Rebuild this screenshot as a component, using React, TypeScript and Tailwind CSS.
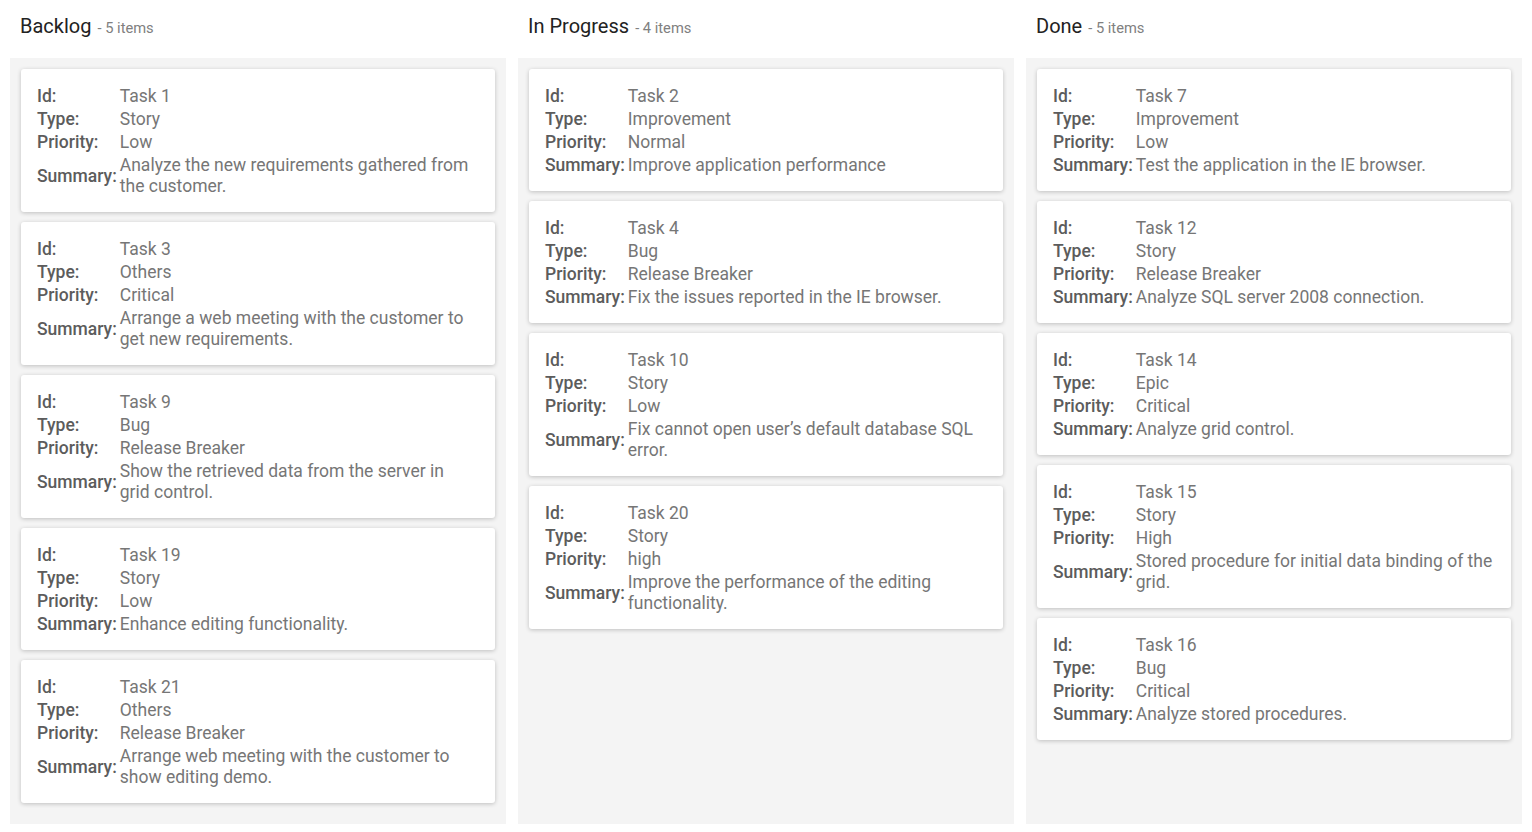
type Task = {
  id: string;
  type: string;
  priority: string;
  summary: string;
};

type Column = {
  title: string;
  tasks: Task[];
};

const columns: Column[] = [
  {
    title: 'Backlog',
    tasks: [
      { id: 'Task 1', type: 'Story', priority: 'Low', summary: 'Analyze the new requirements gathered from the customer.' },
      { id: 'Task 3', type: 'Others', priority: 'Critical', summary: 'Arrange a web meeting with the customer to get new requirements.' },
      { id: 'Task 9', type: 'Bug', priority: 'Release Breaker', summary: 'Show the retrieved data from the server in grid control.' },
      { id: 'Task 19', type: 'Story', priority: 'Low', summary: 'Enhance editing functionality.' },
      { id: 'Task 21', type: 'Others', priority: 'Release Breaker', summary: 'Arrange web meeting with the customer to show editing demo.' },
    ],
  },
  {
    title: 'In Progress',
    tasks: [
      { id: 'Task 2', type: 'Improvement', priority: 'Normal', summary: 'Improve application performance' },
      { id: 'Task 4', type: 'Bug', priority: 'Release Breaker', summary: 'Fix the issues reported in the IE browser.' },
      { id: 'Task 10', type: 'Story', priority: 'Low', summary: 'Fix cannot open user’s default database SQL error.' },
      { id: 'Task 20', type: 'Story', priority: 'high', summary: 'Improve the performance of the editing functionality.' },
    ],
  },
  {
    title: 'Done',
    tasks: [
      { id: 'Task 7', type: 'Improvement', priority: 'Low', summary: 'Test the application in the IE browser.' },
      { id: 'Task 12', type: 'Story', priority: 'Release Breaker', summary: 'Analyze SQL server 2008 connection.' },
      { id: 'Task 14', type: 'Epic', priority: 'Critical', summary: 'Analyze grid control.' },
      { id: 'Task 15', type: 'Story', priority: 'High', summary: 'Stored procedure for initial data binding of the grid.' },
      { id: 'Task 16', type: 'Bug', priority: 'Critical', summary: 'Analyze stored procedures.' },
    ],
  },
];

function Row({ label, value }: { label: string; value: string }) {
  return (
    <>
      <div className="py-[1px] pr-[3px] font-medium text-[#5c5c5c] self-center">{label}</div>
      <div className="py-[1px] text-[#767676] self-center">{value}</div>
    </>
  );
}

function Card({ task }: { task: Task }) {
  return (
    <div className="bg-white rounded-[3px] shadow-[0_1px_4px_rgba(0,0,0,0.22)] pl-4 pr-[18px] pt-[16px] pb-[14px] mb-[10px]">
      <div className="grid grid-cols-[auto_1fr] text-[17.5px] leading-[21px]">
        <Row label="Id:" value={task.id} />
        <Row label="Type:" value={task.type} />
        <Row label="Priority:" value={task.priority} />
        <Row label="Summary:" value={task.summary} />
      </div>
    </div>
  );
}

export default function App() {
  return (
    <div
      className="h-screen bg-white px-[10px] pb-[8px] grid grid-cols-3 gap-[12px]"
      style={{ fontFamily: 'Roboto, "Liberation Sans", sans-serif' }}
    >
      {columns.map((col) => (
        <div key={col.title} className="flex flex-col min-h-0">
          {/* column header */}
          <div className="h-[58px] pl-[10px] pt-[13px] flex items-baseline gap-[6px]">
            <span className="text-[20px] leading-[26px] text-[#222]">{col.title}</span>
            <span className="text-[14.7px] text-[#808080]">- {col.tasks.length} items</span>
          </div>

          {/* cards */}
          <div className="flex-1 bg-[#f4f4f4] px-[11px] pt-[11px] overflow-hidden">
            {col.tasks.map((t) => (
              <Card key={t.id} task={t} />
            ))}
          </div>
        </div>
      ))}
    </div>
  );
}
